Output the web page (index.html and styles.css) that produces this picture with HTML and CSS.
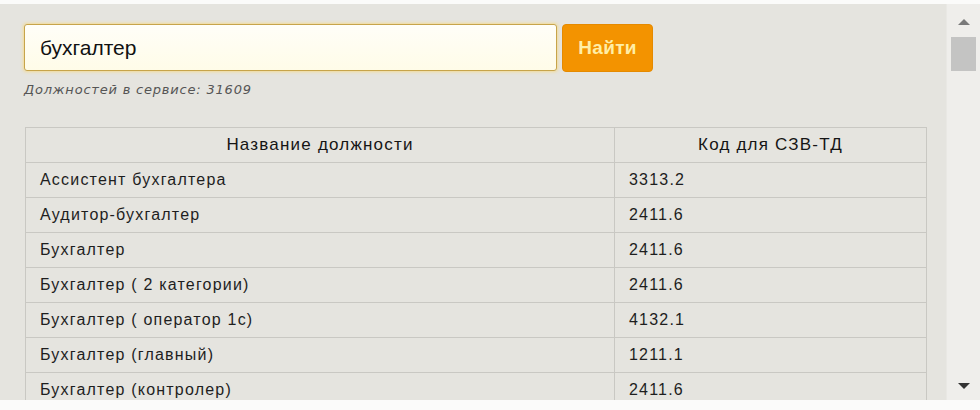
FILE: index.html
```html
<!DOCTYPE html>
<html lang="ru">
<head>
<meta charset="utf-8">
<link rel="stylesheet" href="styles.css">
</head>
<body>
<div class="frame">
  <div class="main">
    <form class="search">
      <input class="search-input" type="text" value="бухгалтер">
      <button class="search-btn" type="button">Найти</button>
    </form>
    <div class="count">Должностей в сервисе: 31609</div>
    <table class="jobs">
      <thead>
        <tr><th class="c1">Название должности</th><th class="c2">Код для СЗВ-ТД</th></tr>
      </thead>
      <tbody>
        <tr><td>Ассистент бухгалтера</td><td>3313.2</td></tr>
        <tr><td>Аудитор-бухгалтер</td><td>2411.6</td></tr>
        <tr><td>Бухгалтер</td><td>2411.6</td></tr>
        <tr><td>Бухгалтер ( 2 категории)</td><td>2411.6</td></tr>
        <tr><td>Бухгалтер ( оператор 1с)</td><td>4132.1</td></tr>
        <tr><td>Бухгалтер (главный)</td><td>1211.1</td></tr>
        <tr><td>Бухгалтер (контролер)</td><td>2411.6</td></tr>
      </tbody>
    </table>
  </div>
  <div class="scrollbar">
    <div class="arrow up"></div>
    <div class="thumb"></div>
    <div class="track"></div>
    <div class="arrow down"></div>
  </div>
</div>
</body>
</html>
```
FILE: styles.css
```css
html, body {
  margin: 0;
  padding: 0;
  background: #fbfbfa;
}
.frame {
  display: flex;
  height: 396px;
  margin-top: 4px;
  background: #e5e4df;
  overflow: hidden;
}
.main {
  flex: 1;
  padding: 20px 0 0 24px;
  overflow: hidden;
}
.search {
  display: flex;
  gap: 5px;
  margin: 0;
}
.search-input {
  box-sizing: border-box;
  width: 533px;
  height: 47px;
  margin: 0;
  padding: 0 0 0 15px;
  border: 1px solid #c7a44a;
  border-radius: 3px;
  background: linear-gradient(#fffef8, #fffce8);
  box-shadow: 0 0 3px 1px rgba(255, 214, 90, 0.55);
  font-family: "Liberation Sans", Arial, sans-serif;
  font-size: 21px;
  color: #111;
  outline: none;
}
.search-btn {
  box-sizing: border-box;
  width: 91px;
  height: 48px;
  margin: 0;
  border: 1px solid #e58a00;
  border-radius: 4px;
  background: #f39300;
  color: #ffeea6;
  font-family: "Liberation Sans", Arial, sans-serif;
  font-weight: bold;
  font-size: 19px;
  letter-spacing: 0.3px;
  padding: 0;
}
.count {
  margin-top: 10px;
  font-family: "DejaVu Sans", Verdana, sans-serif;
  font-style: italic;
  font-size: 13px;
  letter-spacing: 0.8px;
  color: #555;
  height: 16px;
  line-height: 16px;
}
.jobs {
  margin-top: 29px;
  margin-left: 1px;
  width: 902px;
  border-collapse: collapse;
  font-family: "Liberation Sans", Arial, sans-serif;
  font-size: 16px;
  color: #1e1e1e;
  letter-spacing: 1.2px;
}
.jobs th, .jobs td {
  border: 1px solid #c9c8c3;
  height: 34px;
  padding: 0 0 0 14px;
  text-align: left;
  font-weight: normal;
}
.jobs th {
  text-align: center;
  padding: 0;
  font-size: 17px;
  color: #151515;
}
.jobs .c1 { width: 588px; }
.scrollbar {
  width: 33px;
  display: flex;
  flex-direction: column;
  align-items: center;
  background: #efeeeb;
  border-left: 1px solid #e9e8e4;
}
.arrow {
  width: 0;
  height: 0;
  border-left: 6px solid transparent;
  border-right: 6px solid transparent;
}
.arrow.up {
  margin-top: 15px;
  border-bottom: 6px solid #7a7a7a;
}
.thumb {
  margin-top: 12px;
  width: 25px;
  height: 34px;
  background: #c4c4c3;
}
.track { flex: 1; }
.arrow.down {
  margin-bottom: 11px;
  border-top: 6px solid #333;
}
```
